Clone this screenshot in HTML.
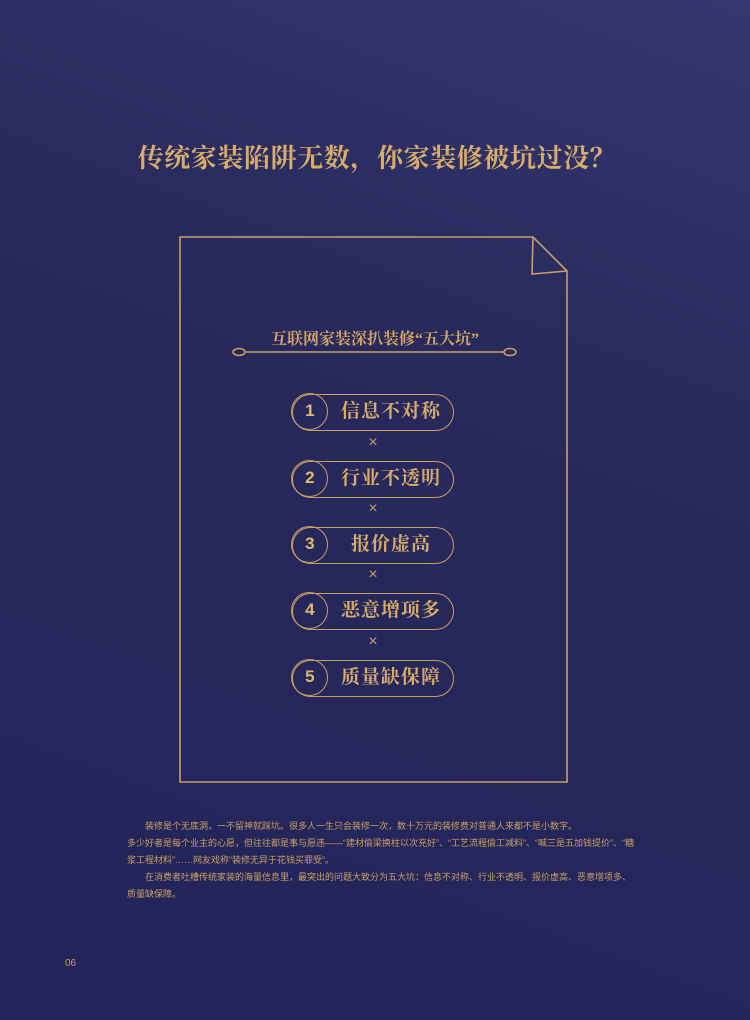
<!DOCTYPE html>
<html><head><meta charset="utf-8"><style>
body{margin:0;width:750px;height:1020px;overflow:hidden;background:linear-gradient(200deg,#353870 0%,#28295c 35%,#23245a 100%);font-family:"Liberation Serif","Noto Serif CJK SC",serif;position:relative}
h1{position:absolute;left:2px;width:750px;top:138px;margin:0;text-align:center;font-size:26px;font-weight:bold;color:#d8ad6a;letter-spacing:0.6px}
.sub{position:absolute;left:0;width:750px;top:326px;text-align:center;font-size:16px;font-weight:bold;color:#d2a765}
.pill{position:absolute;left:292px;width:162px;height:37px;border:1.6px solid #c9a063;border-radius:20px;box-sizing:border-box}
.pill .c{position:absolute;left:-1.6px;top:-1.6px;width:37px;height:37px;border:1.6px solid #c9a063;border-radius:50%;box-sizing:border-box;color:#e0b870;font:bold 17px "Liberation Sans",sans-serif;text-align:center;line-height:34px}
.pill .t{position:absolute;left:40px;right:4px;top:0;line-height:34px;text-align:center;font-size:19px;font-weight:bold;color:#d8ad6a;letter-spacing:1px}
.x{position:absolute;left:366px;width:14px;text-align:center;color:#c9a063;font:16px "Liberation Sans",sans-serif}
.p{position:absolute;left:127px;width:512px;top:818px;font-family:"Liberation Sans","Noto Sans CJK SC",sans-serif;font-size:9px;line-height:17px;color:#c9a063}
.p div{text-indent:2em}
</style></head><body>
<h1>传统家装陷阱无数，你家装修被坑过没？</h1>
<svg width="750" height="1020" style="position:absolute;left:0;top:0">
<g fill="none" stroke="#c9a063" stroke-width="1.6">
<path d="M180 237 H533 L567 271 V782 H180 Z"/>
<path d="M533 237 L532 274 L567 271"/>
<line x1="246" y1="352" x2="504" y2="352"/>
<ellipse cx="239" cy="352" rx="6" ry="3.5"/>
<ellipse cx="510" cy="352" rx="6" ry="3.5"/>
</g>
</svg>
<div class="sub">互联网家装深扒装修“五大坑”</div>
<div class="pill" style="top:394px"><div class="c">1</div><div class="t">信息不对称</div></div>
<div class="x" style="top:434px">×</div>
<div class="pill" style="top:461px"><div class="c">2</div><div class="t">行业不透明</div></div>
<div class="x" style="top:500px">×</div>
<div class="pill" style="top:527px"><div class="c">3</div><div class="t">报价虚高</div></div>
<div class="x" style="top:566px">×</div>
<div class="pill" style="top:593px"><div class="c">4</div><div class="t">恶意增项多</div></div>
<div class="x" style="top:633px">×</div>
<div class="pill" style="top:660px"><div class="c">5</div><div class="t">质量缺保障</div></div>
<div class="p"><div>装修是个无底洞，一不留神就踩坑。很多人一生只会装修一次，数十万元的装修费对普通人来都不是小数字。</div>多少好者是每个业主的心愿，但往往都是事与愿违——“建材偷梁换柱以次充好”、“工艺流程偷工减料”、“喊三是五加钱提价”、“糖浆工程材料”……网友戏称“装修无异于花钱买罪受”。<div>在消费者吐槽传统家装的海量信息里，最突出的问题大致分为五大坑：信息不对称、行业不透明、报价虚高、恶意增项多、质量缺保障。</div></div>
<div style="position:absolute;left:65px;top:958px;font:10px 'Liberation Sans',sans-serif;color:#c9a063">06</div>
</body></html>
